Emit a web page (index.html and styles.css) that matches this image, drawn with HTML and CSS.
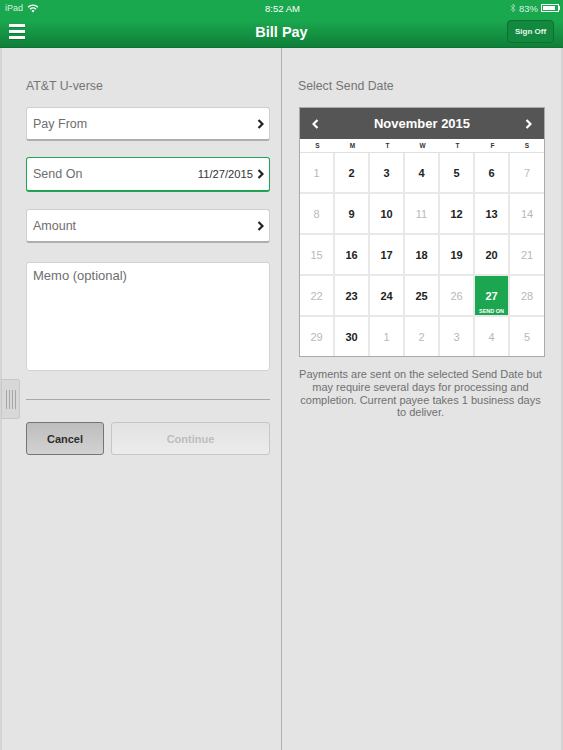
FILE: index.html
```html
<!DOCTYPE html>
<html lang="en">
<head>
    <meta charset="UTF-8">
    <meta name="viewport" content="width=device-width, initial-scale=1.0">
    <title>Bill Pay</title>
    <link rel="stylesheet" href="styles.css">
</head>
<body>
    <header class="top">
        <div class="status">
            <div class="status-left">
                <span>iPad</span>
                <svg width="12" height="9" viewBox="0 0 12 9"><path d="M6 8.6 L4.4 6.8 A2.3 2.3 0 0 1 7.6 6.8 Z M3.4 5.7 L2.5 4.7 A5 5 0 0 1 9.5 4.7 L8.6 5.7 A3.7 3.7 0 0 0 3.4 5.7 Z M1.6 3.7 L.6 2.7 A7.6 7.6 0 0 1 11.4 2.7 L10.4 3.7 A6.2 6.2 0 0 0 1.6 3.7 Z" fill="#fff"/></svg>
            </div>
            <div class="status-time">8:52 AM</div>
            <div class="status-right">
                <svg width="6" height="10" viewBox="0 0 6 10"><path d="M.5 2.7 L5 6.8 L3 9 V1 L5 3.2 L.5 7.3" fill="none" stroke="#8fd0a5" stroke-width="1"/></svg>
                <span>83%</span>
                <div class="battery"><div class="battery-fill"></div></div>
                <div class="battery-tip"></div>
            </div>
        </div>
        <div class="nav">
            <div class="menu"><span></span><span></span><span></span></div>
            <div class="nav-title">Bill Pay</div>
            <button class="sign-off">Sign Off</button>
        </div>
    </header>

    <main class="panes">
        <section class="pane pane-left">
            <h2 class="label">AT&amp;T U-verse</h2>
            <div class="field"><span>Pay From</span><svg class="chev" viewBox="0 0 7 10"><path d="M1.5 1 L5.5 5 L1.5 9" /></svg></div>
            <div class="field field-active"><span>Send On</span><span class="field-value">11/27/2015</span><svg class="chev" viewBox="0 0 7 10"><path d="M1.5 1 L5.5 5 L1.5 9" /></svg></div>
            <div class="field"><span>Amount</span><svg class="chev" viewBox="0 0 7 10"><path d="M1.5 1 L5.5 5 L1.5 9" /></svg></div>
            <div class="memo">Memo (optional)</div>
            <hr class="rule">
            <div class="actions">
                <button class="btn btn-cancel">Cancel</button>
                <button class="btn btn-continue">Continue</button>
            </div>
        </section>

        <section class="pane pane-right">
            <h2 class="label">Select Send Date</h2>
            <div class="calendar">
                <div class="cal-head">
                    <svg class="cal-arrow" viewBox="0 0 7 10"><path d="M5.5 1 L1.5 5 L5.5 9" /></svg>
                    <span>November 2015</span>
                    <svg class="cal-arrow" viewBox="0 0 7 10"><path d="M1.5 1 L5.5 5 L1.5 9" /></svg>
                </div>
                <div class="cal-days">
                    <span>S</span><span>M</span><span>T</span><span>W</span><span>T</span><span>F</span><span>S</span>
                </div>
                <div class="cal-grid">
                    <div class="day off">1</div><div class="day">2</div><div class="day">3</div><div class="day">4</div><div class="day">5</div><div class="day">6</div><div class="day off">7</div>
                    <div class="day off">8</div><div class="day">9</div><div class="day">10</div><div class="day off">11</div><div class="day">12</div><div class="day">13</div><div class="day off">14</div>
                    <div class="day off">15</div><div class="day">16</div><div class="day">17</div><div class="day">18</div><div class="day">19</div><div class="day">20</div><div class="day off">21</div>
                    <div class="day off">22</div><div class="day">23</div><div class="day">24</div><div class="day">25</div><div class="day off">26</div><div class="day selected">27<small>SEND ON</small></div><div class="day off">28</div>
                    <div class="day off">29</div><div class="day">30</div><div class="day off">1</div><div class="day off">2</div><div class="day off">3</div><div class="day off">4</div><div class="day off">5</div>
                </div>
            </div>
            <p class="note">Payments are sent on the selected Send Date but may require several days for processing and completion. Current payee takes 1 business days to deliver.</p>
        </section>
    </main>

    <div class="handle"><span></span><span></span><span></span><span></span></div>
</body>
</html>
```

FILE: styles.css
```css
* { box-sizing: border-box; }

body {
    margin: 0;
    height: 750px;
    overflow: hidden;
    position: relative;
    display: flex;
    flex-direction: column;
    font-family: "Liberation Sans", Arial, sans-serif;
    background: #e4e4e4;
    color: #6f6f6f;
}

/* header */
.top {
    height: 48px;
    flex: none;
    background: linear-gradient(#1aa84f 0, #1aa84f 20px, #0f7f38 47px);
    border-bottom: 1px solid #0e7434;
    color: #fff;
}
.status {
    height: 16px;
    padding: 0 3px 0 5px;
    display: grid;
    grid-template-columns: 1fr auto 1fr;
    align-items: center;
    font-size: 9px;
}
.status-left { display: flex; align-items: center; gap: 4px; }
.status-left span { color: #d8f0e0; }
.status-time { font-size: 9.5px; }
.status-right { display: flex; align-items: center; justify-content: flex-end; gap: 3px; font-size: 9.5px; color: #d8f0e0; }
.battery {
    width: 18px;
    height: 8px;
    border: 1px solid #fff;
    padding: 1px;
}
.battery-fill { width: 83%; height: 100%; background: #fff; }
.battery-tip { width: 1px; height: 4px; margin-left: -3px; background: #fff; }

.nav {
    height: 31px;
    padding: 0 9px;
    display: grid;
    grid-template-columns: 1fr auto 1fr;
    align-items: center;
}
.menu { width: 16px; display: flex; flex-direction: column; gap: 3px; }
.menu span { height: 3px; background: #fff; box-shadow: 0 1px 0 rgba(0,0,0,0.15); }
.nav-title {
    text-align: center;
    font-size: 14.5px;
    font-weight: bold;
}
.sign-off {
    justify-self: end;
    width: 47px;
    height: 23px;
    padding: 0;
    font-family: inherit;
    font-size: 8px;
    font-weight: bold;
    color: #e8f5ec;
    background: #12893e;
    border: 1px solid #0d7030;
    border-radius: 4px;
}

/* two panes */
.panes { flex: 1; display: flex; }
.pane { height: 100%; }
.pane-left {
    flex: none;
    width: 282px;
    padding: 31px 11px 0 24px;
    border-left: 2px solid #d4d4d4;
    border-right: 1px solid #b0b0b0;
}
.pane-right {
    flex: 1;
    min-width: 0;
    padding: 31px 0 0 16px;
    border-right: 2px solid #d4d4d4;
}
.label {
    margin: 0 0 13px;
    font-size: 12.3px;
    line-height: 15px;
    font-weight: normal;
    color: #757575;
}

/* form */
.field {
    height: 34px;
    margin-bottom: 16px;
    padding: 0 5px 0 6px;
    display: flex;
    align-items: center;
    background: #fff;
    border: 1px solid #cfcfcf;
    border-bottom: 2px solid #aeaeae;
    border-radius: 3px;
    font-size: 12.5px;
    color: #6e6e6e;
}
.field-active { height: 35px; border-color: #1ea452; border-bottom-color: #1ea452; margin-bottom: 17px; }
.field-value { margin-left: auto; margin-right: 4px; font-size: 11.2px; color: #333; }
.chev { width: 7px; height: 10px; margin-left: auto; fill: none; stroke: #222; stroke-width: 2.2; }
.field-value + .chev { margin-left: 0; }
.memo {
    height: 109px;
    margin-top: 19px;
    padding: 5px 6px;
    background: #fff;
    border: 1px solid #d2d2d2;
    border-radius: 3px;
    font-size: 13px;
    color: #6e6e6e;
}
.rule { margin: 28px 0 0; border: 0; border-top: 1px solid #a8a8a8; }
.actions { display: flex; gap: 7px; margin-top: 22px; }
.btn {
    height: 33px;
    padding: 0;
    font-family: inherit;
    font-size: 11px;
    font-weight: bold;
    border-radius: 3px;
}
.btn-cancel {
    width: 78px;
    color: #2e2e2e;
    background: linear-gradient(#bdbdbd, #d2d2d2);
    border: 1px solid #757575;
}
.btn-continue {
    flex: 1;
    color: #bdbdbd;
    background: linear-gradient(#e2e2e2, #ececec);
    border: 1px solid #c6c6c6;
}

/* calendar */
.calendar {
    width: 246px;
    margin-left: 1px;
    background: #fff;
    border: 1px solid #a9a9a9;
}
.cal-head {
    height: 31px;
    padding: 0 12px;
    display: flex;
    align-items: center;
    justify-content: space-between;
    background: #555;
    color: #fff;
    font-size: 13px;
    font-weight: bold;
}
.cal-arrow { width: 7px; height: 10px; fill: none; stroke: #fff; stroke-width: 2.2; }
.cal-days {
    height: 14px;
    display: grid;
    grid-template-columns: repeat(6, 35px) 1fr;
    text-align: center;
    font-size: 6.5px;
    line-height: 13px;
    font-weight: bold;
    color: #333;
    border-bottom: 1px solid #e0e0e0;
}
.cal-grid {
    display: grid;
    grid-template-columns: repeat(6, 35px) 1fr;
    grid-template-rows: repeat(4, 41px) 39px;
}
.day {
    position: relative;
    display: flex;
    align-items: center;
    justify-content: center;
    font-size: 11px;
    font-weight: bold;
    color: #222;
    border-right: 2px solid #e8e8e8;
    border-bottom: 2px solid #e8e8e8;
}
.day:nth-child(7n) { border-right: 0; }
.day:nth-last-child(-n+7) { border-bottom: 0; }
.day.off { font-weight: normal; color: #b8b8b8; }
.day.selected { background: #1ca650; color: #fff; }
.day small {
    position: absolute;
    left: 0;
    right: 0;
    bottom: 0;
    text-align: center;
    font-size: 5.5px;
    line-height: 8px;
}
.note {
    width: 247px;
    margin: 11px 0 0 -1px;
    text-align: center;
    font-size: 11px;
    line-height: 12.8px;
    color: #707070;
}

/* side drawer handle */
.handle {
    position: absolute;
    left: 1px;
    top: 379px;
    width: 19px;
    height: 40px;
    padding-top: 10px;
    display: flex;
    justify-content: center;
    gap: 2px;
    background: #d8d8d8;
    border: 1px solid #c8c8c8;
    border-radius: 0 2px 2px 0;
}
.handle span { width: 1px; height: 19px; background: #a6a6a6; }
```
